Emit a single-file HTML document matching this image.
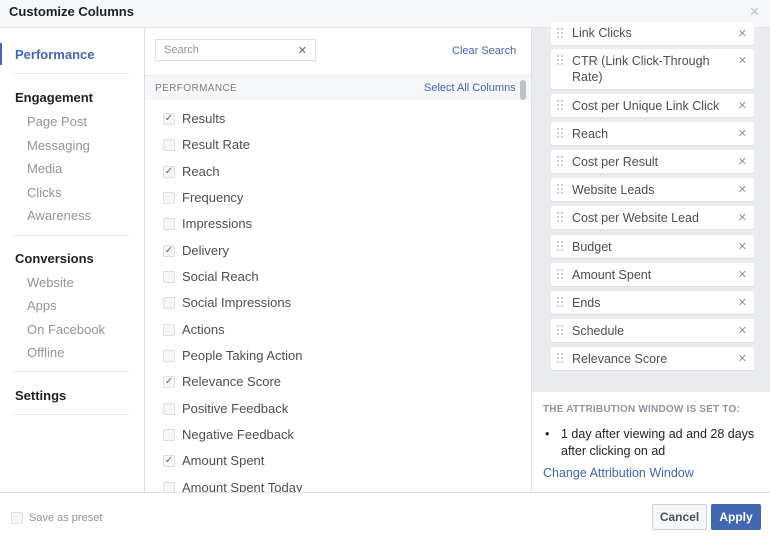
<!DOCTYPE html><html><head><style>
*{box-sizing:border-box;margin:0;padding:0}
body{width:770px;height:537px;overflow:hidden;font-family:"Liberation Sans",Helvetica,Arial,sans-serif;background:#fff;position:relative;color:#4b4f56}
.hdr{position:absolute;left:0;top:0;width:770px;height:28px;background:#f6f7f9;border-bottom:1px solid #e5e5e5}
.hdr b{position:absolute;left:9px;top:4px;font-size:13px;color:#1d2129}
.hdr .x{position:absolute;right:10px;top:4px;font-size:13px;color:#bec2c9}
.nav{position:absolute;left:0;top:28px;width:145px;height:464px;background:#fff;border-right:1px solid #dddfe2}
.nav .a{position:absolute;left:15px;font-size:13px;color:#1d2129;font-weight:bold}
.nav .s{position:absolute;left:27px;font-size:13px;color:#90949c}
.nav .hr{position:absolute;left:13px;width:116px;border-top:1px solid #e9ebee}
.mid{position:absolute;left:145px;top:28px;width:386px;height:464px;background:#fff}
.search{position:absolute;left:10px;top:11px;width:161px;height:22px;border:1px solid #dddfe2;font-size:11px;color:#90949c;padding:4px 8px}
.search span{position:absolute;right:8px;top:4px;font-size:11px;color:#606770}
.link{color:#4267b2;font-size:11px;position:absolute}
.sec{position:absolute;left:0;top:47px;width:386px;height:25px;background:#f6f7f9;border-top:1px solid #e9ebee}
.sec b{position:absolute;left:10px;top:7px;font-size:10px;color:#7f7f7f;font-weight:normal;letter-spacing:.4px}
.row{position:absolute;left:18px;font-size:13px;color:#4b4f56}
.row i{position:absolute;left:0;top:2px;width:12px;height:12px;border:1px solid #dddfe2;border-radius:2px;background:#f5f6f7;font-style:normal;font-size:10px;line-height:10px;text-align:center;color:#606770}
.row span{position:absolute;left:19px;top:0;white-space:nowrap}
.scroll{position:absolute;left:520px;top:80px;width:6px;height:20px;background:#bec2c9;border-radius:3px}
.right{position:absolute;left:531px;top:28px;width:239px;height:364px;background:#e9ebee;border-left:1px solid #dddfe2}
.it{position:absolute;left:19px;width:203px;background:#fff;border-radius:2px;font-size:12.5px;color:#4b4f56;padding:4px 24px 0 21px;line-height:16px;box-shadow:0 1px 0 #dddfe2;white-space:nowrap}
.it.w{white-space:normal}
.it:before{content:"";position:absolute;left:6px;top:6px;width:2px;height:2px;background:#ccd0d5;box-shadow:4px 0 #ccd0d5,0 4px #ccd0d5,4px 4px #ccd0d5,0 8px #ccd0d5,4px 8px #ccd0d5}
.it b{position:absolute;right:7px;top:4px;font-size:11px;color:#90949c;font-weight:normal}
.att{position:absolute;left:531px;top:392px;width:239px;height:100px;background:#fff;border-left:1px solid #dddfe2}
.foot{position:absolute;left:0;top:492px;width:770px;height:45px;background:#fff;border-top:1px solid #dddfe2}
.btn{position:absolute;top:11px;height:26px;font-size:12px;font-weight:bold;border-radius:2px;text-align:center;line-height:24px}
</style></head><body>
<div class="hdr"><b>Customize Columns</b><span class="x">✕</span></div>
<div class="nav">
<div style="position:absolute;left:0;top:15px;width:2px;height:22px;background:#4267b2"></div>
<div class="a" style="top:19px;color:#4267b2">Performance</div>
<div class="hr" style="top:45px"></div>
<div class="a" style="top:62px">Engagement</div>
<div class="s" style="top:86px">Page Post</div>
<div class="s" style="top:110px">Messaging</div>
<div class="s" style="top:133px">Media</div>
<div class="s" style="top:157px">Clicks</div>
<div class="s" style="top:180px">Awareness</div>
<div class="hr" style="top:207px"></div>
<div class="a" style="top:223px">Conversions</div>
<div class="s" style="top:247px">Website</div>
<div class="s" style="top:270px">Apps</div>
<div class="s" style="top:294px">On Facebook</div>
<div class="s" style="top:317px">Offline</div>
<div class="hr" style="top:343px"></div>
<div class="a" style="top:360px">Settings</div>
<div class="hr" style="top:386px"></div>
</div>
<div class="mid">
<div class="search">Search<span>✕</span></div>
<div class="link" style="left:307px;top:17px">Clear Search</div>
<div class="sec"><b>PERFORMANCE</b><span class="link" style="left:279px;top:6px">Select All Columns</span></div>
<div class="row" style="top:83px"><i>✓</i><span>Results</span></div>
<div class="row" style="top:109px"><i></i><span>Result Rate</span></div>
<div class="row" style="top:136px"><i>✓</i><span>Reach</span></div>
<div class="row" style="top:162px"><i></i><span>Frequency</span></div>
<div class="row" style="top:188px"><i></i><span>Impressions</span></div>
<div class="row" style="top:215px"><i>✓</i><span>Delivery</span></div>
<div class="row" style="top:241px"><i></i><span>Social Reach</span></div>
<div class="row" style="top:267px"><i></i><span>Social Impressions</span></div>
<div class="row" style="top:294px"><i></i><span>Actions</span></div>
<div class="row" style="top:320px"><i></i><span>People Taking Action</span></div>
<div class="row" style="top:346px"><i>✓</i><span>Relevance Score</span></div>
<div class="row" style="top:373px"><i></i><span>Positive Feedback</span></div>
<div class="row" style="top:399px"><i></i><span>Negative Feedback</span></div>
<div class="row" style="top:425px"><i>✓</i><span>Amount Spent</span></div>
<div class="row" style="top:452px"><i></i><span>Amount Spent Today</span></div>
</div>
<div class="scroll"></div>
<div class="right">
<div class="it" style="top:-6px;height:23px;padding-top:3px">Link Clicks<b>✕</b></div>
<div class="it w" style="top:21px;height:40px;padding-top:4px">CTR (Link Click-Through Rate)<b>✕</b></div>
<div class="it" style="top:66px;height:23px">Cost per Unique Link Click<b>✕</b></div>
<div class="it" style="top:94px;height:23px">Reach<b>✕</b></div>
<div class="it" style="top:122px;height:23px">Cost per Result<b>✕</b></div>
<div class="it" style="top:150px;height:23px">Website Leads<b>✕</b></div>
<div class="it" style="top:178px;height:23px">Cost per Website Lead<b>✕</b></div>
<div class="it" style="top:207px;height:23px">Budget<b>✕</b></div>
<div class="it" style="top:235px;height:23px">Amount Spent<b>✕</b></div>
<div class="it" style="top:263px;height:23px">Ends<b>✕</b></div>
<div class="it" style="top:291px;height:23px">Schedule<b>✕</b></div>
<div class="it" style="top:319px;height:23px">Relevance Score<b>✕</b></div>
</div>
<div class="att">
<div style="position:absolute;left:11px;top:12px;font-size:10px;font-weight:bold;color:#90949c;letter-spacing:.2px">THE ATTRIBUTION WINDOW IS SET TO:</div>
<div style="position:absolute;left:13px;top:34px;font-size:12.5px;color:#1d2129;line-height:17px">•</div>
<div style="position:absolute;left:29px;top:34px;width:205px;font-size:12.5px;color:#1d2129;line-height:17px">1 day after viewing ad and 28 days after clicking on ad</div>
<div style="position:absolute;left:11px;top:74px;font-size:12.5px;color:#4267b2">Change Attribution Window</div>
</div>
<div class="foot">
<div style="position:absolute;left:11px;top:19px;width:12px;height:12px;border:1px solid #dddfe2;border-radius:2px;background:#f5f6f7"></div>
<div style="position:absolute;left:29px;top:19px;font-size:11px;color:#90949c">Save as preset</div>
<div class="btn" style="left:652px;width:55px;background:#f6f7f9;border:1px solid #ced0d4;color:#4b4f56">Cancel</div>
<div class="btn" style="left:711px;width:50px;background:#4267b2;border:1px solid #4267b2;color:#fff">Apply</div>
</div>
</body></html>
